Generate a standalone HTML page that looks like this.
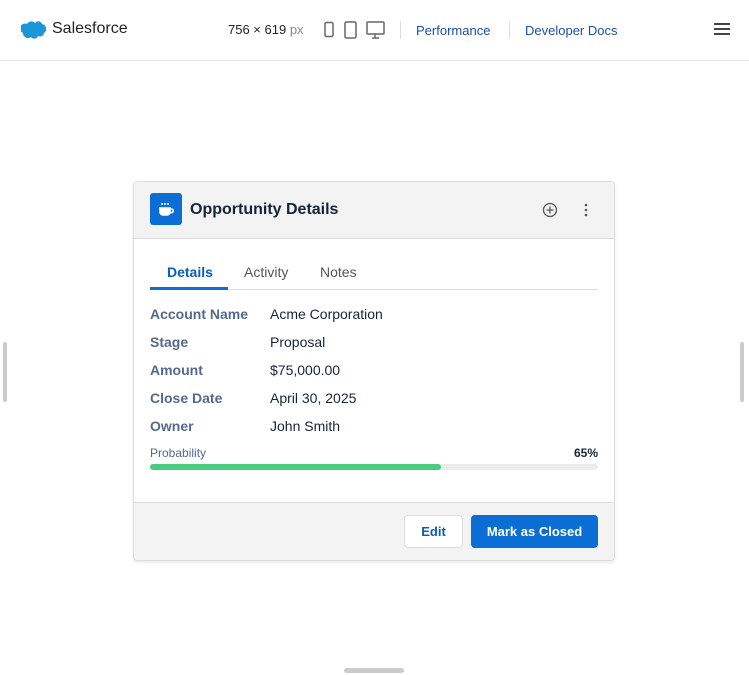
<!DOCTYPE html>
<html><head><style>
*{box-sizing:border-box;margin:0;padding:0}
body{width:749px;height:675px;background:#fff;font-family:"Liberation Sans",Arial,sans-serif;position:relative;overflow:hidden}
.a{position:absolute}
.top{left:0;top:0;width:749px;height:61px;border-bottom:1px solid #e5e5e5}
.lbl{left:150px;font-size:14px;font-weight:bold;color:#54698d}
.val{left:270px;font-size:14px;color:#16243b}
</style></head><body>
<div class="a top"></div>
<svg class="a" style="left:21px;top:20px" width="26" height="19" viewBox="0 0 26 19"><path d="M6 4a5 5 0 0 1 8-1 4 4 0 0 1 7 1 5 5 0 0 1 2 9 4 4 0 0 1-6 3 4 4 0 0 1-7 1 5 5 0 0 1-8-4A4 4 0 0 1 6 4z" fill="#1b96d6"/></svg>
<div class="a" style="left:52px;top:20px;font-size:16px;color:#222">Salesforce</div>
<div class="a" style="left:228px;top:22px;font-size:13px;color:#222">756 × 619 <span style="color:#888">px</span></div>
<svg class="a" style="left:322px;top:21px" width="66" height="20" viewBox="0 0 66 20" fill="none" stroke="#666" stroke-width="1.5"><rect x="3" y="1.5" width="8" height="14" rx="1.5"/><rect x="23" y="1" width="11" height="16" rx="1.5"/><rect x="45" y="1" width="17" height="12" rx="1"/><path d="M53 13v4M50 17h7"/></svg>
<div class="a" style="left:400px;top:21px;width:1px;height:18px;background:#ddd"></div>
<div class="a" style="left:416px;top:23px;font-size:13px;color:#1c4fa8">Performance</div>
<div class="a" style="left:509px;top:21px;width:1px;height:18px;background:#ddd"></div>
<div class="a" style="left:525px;top:23px;font-size:13px;color:#1c4fa8">Developer Docs</div>
<div class="a" style="left:714px;top:23px;width:16px;height:2px;background:#444;box-shadow:0 5px 0 #444,0 10px 0 #444"></div>
<div class="a" style="left:3px;top:342px;width:4px;height:60px;background:#ccc;border-radius:2px"></div>
<div class="a" style="left:740px;top:342px;width:4px;height:60px;background:#ccc;border-radius:2px"></div>
<div class="a" style="left:344px;top:668px;width:60px;height:5px;background:#ccc;border-radius:3px"></div>

<div class="a" style="left:133px;top:181px;width:482px;height:380px;border:1px solid #dcdcdc;border-radius:4px;background:#fff;box-shadow:0 2px 3px rgba(0,0,0,.08);overflow:hidden">
 <div class="a" style="left:0;top:0;width:480px;height:57px;background:#f3f3f3;border-bottom:1px solid #dcdcdc"></div>
 <div class="a" style="left:16px;top:11px;width:32px;height:32px;background:#0b6ed4;border-radius:3px"></div>
 <svg class="a" style="left:16px;top:11px" width="32" height="32" viewBox="0 0 32 32" fill="none" stroke="#fff" stroke-width="1.6"><path d="M10 15h10v4a3 3 0 0 1-3 3h-4a3 3 0 0 1-3-3z" fill="#fff"/><path d="M20 16h1.5a1.8 1.8 0 0 1 0 3.6H20"/><path d="M12 10v2M15 10v2M18 10v2"/></svg>
 <div class="a" style="left:56px;top:19px;font-size:16px;font-weight:bold;color:#16243b">Opportunity Details</div>
 <svg class="a" style="left:408px;top:20px" width="16" height="16" viewBox="0 0 16 16" fill="none" stroke="#555" stroke-width="1.3"><circle cx="8" cy="8" r="6.5"/><path d="M8 4.5v7M4.5 8h7"/></svg>
 <svg class="a" style="left:449px;top:20px" width="6" height="16"><circle cx="3" cy="3" r="1.3" fill="#555"/><circle cx="3" cy="8" r="1.3" fill="#555"/><circle cx="3" cy="13" r="1.3" fill="#555"/></svg>
 <div class="a" style="left:16px;top:107px;width:448px;height:1px;background:#ddd"></div>
 <div class="a" style="left:16px;top:105px;width:78px;height:3px;background:#0b6ed4"></div>
 <div class="a" style="left:33px;top:82px;font-size:14px;font-weight:bold;color:#0b5cb8">Details</div>
 <div class="a" style="left:110px;top:82px;font-size:14px;color:#555">Activity</div>
 <div class="a" style="left:186px;top:82px;font-size:14px;color:#555">Notes</div>
</div>
<div class="a lbl" style="top:306px">Account Name</div><div class="a val" style="top:306px">Acme Corporation</div>
<div class="a lbl" style="top:334px">Stage</div><div class="a val" style="top:334px">Proposal</div>
<div class="a lbl" style="top:362px">Amount</div><div class="a val" style="top:362px">$75,000.00</div>
<div class="a lbl" style="top:390px">Close Date</div><div class="a val" style="top:390px">April 30, 2025</div>
<div class="a lbl" style="top:418px">Owner</div><div class="a val" style="top:418px">John Smith</div>
<div class="a" style="left:150px;top:446px;font-size:12px;color:#54698d">Probability</div>
<div class="a" style="left:560px;top:446px;width:38px;text-align:right;font-size:12px;font-weight:bold;color:#16243b">65%</div>
<div class="a" style="left:150px;top:464px;width:448px;height:6px;background:#ececec;border-radius:3px"></div>
<div class="a" style="left:150px;top:464px;width:291px;height:6px;background:#4bca81;border-radius:3px"></div>
<div class="a" style="left:134px;top:502px;width:480px;height:58px;background:#f3f3f3;border-top:1px solid #dcdcdc;border-radius:0 0 4px 4px"></div>
<div class="a" style="left:404px;top:515px;width:59px;height:33px;background:#fff;border:1px solid #ddd;border-radius:4px;font-size:13px;font-weight:bold;color:#0b5cb8;text-align:center;line-height:31px">Edit</div>
<div class="a" style="left:471px;top:515px;width:127px;height:33px;background:#0b6ed4;border-radius:4px;font-size:13px;font-weight:bold;color:#fff;text-align:center;line-height:33px">Mark as Closed</div>
</body></html>
